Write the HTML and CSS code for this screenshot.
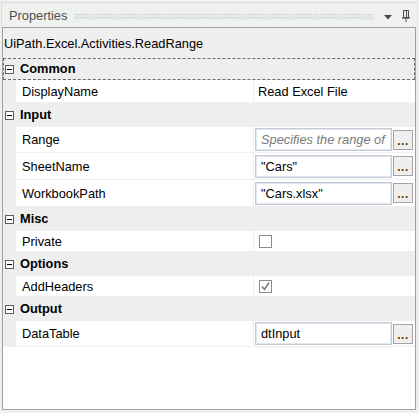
FILE: index.html
```html
<!DOCTYPE html>
<html>
<head>
<meta charset="utf-8">
<link rel="stylesheet" href="styles.css">
</head>
<body>
<div class="window">
  <div class="titlebar">
    <span class="title">Properties</span>
    <svg class="grip" width="300" height="6" viewBox="0 0 300 6">
      <defs>
        <pattern id="dots" width="3" height="3" patternUnits="userSpaceOnUse">
          <rect x="0" y="0" width="1" height="1" fill="#a9b2a9"/>
          <rect x="1.5" y="1.5" width="1" height="1" fill="#c4ccc4"/>
        </pattern>
      </defs>
      <rect x="0" y="0" width="300" height="6" fill="url(#dots)"/>
    </svg>
    <svg class="drop" width="8" height="5" viewBox="0 0 8 5"><path d="M0 0 H8 L4 4.5 Z" fill="#4a4a4a"/></svg>
    <svg class="pin" width="8" height="12" viewBox="0 0 8 12">
      <path d="M1.5 0.5 H6.5 V7.5 H1.5 Z" fill="none" stroke="#444" stroke-width="1"/>
      <path d="M4.5 1 V7" stroke="#444" stroke-width="1"/>
      <path d="M0 8 H8" stroke="#444" stroke-width="1.2"/>
      <path d="M4 8.5 V12" stroke="#444" stroke-width="1"/>
    </svg>
  </div>
  <div class="panel">
    <div class="desc">UiPath.Excel.Activities.ReadRange</div>
    <div class="grid">
      <div class="cat focus"><span class="box"></span><span class="cname">Common</span></div>
      <div class="row h23"><div class="name">DisplayName</div><div class="val"><span class="plain">Read Excel File</span></div></div>

      <div class="cat"><span class="box"></span><span class="cname">Input</span></div>
      <div class="row tb"><div class="name">Range</div><div class="val"><div class="textbox hint">Specifies the range of</div><div class="ell">...</div></div></div>
      <div class="row tb t27"><div class="name">SheetName</div><div class="val"><div class="textbox">"Cars"</div><div class="ell">...</div></div></div>
      <div class="row tb t27"><div class="name">WorkbookPath</div><div class="val"><div class="textbox">"Cars.xlsx"</div><div class="ell">...</div></div></div>

      <div class="cat"><span class="box"></span><span class="cname">Misc</span></div>
      <div class="row"><div class="name">Private</div><div class="val"><span class="check"></span></div></div>

      <div class="cat"><span class="box"></span><span class="cname">Options</span></div>
      <div class="row"><div class="name">AddHeaders</div><div class="val"><span class="check on"><svg width="11" height="11" viewBox="0 0 11 11"><path d="M2 5.5 L4.5 8.5 L9 1.5" fill="none" stroke="#7a7a7a" stroke-width="1.6"/></svg></span></div></div>

      <div class="cat"><span class="box"></span><span class="cname">Output</span></div>
      <div class="row tb"><div class="name">DataTable</div><div class="val"><div class="textbox">dtInput</div><div class="ell">...</div></div></div>
    </div>
  </div>
</div>
</body>
</html>
```

FILE: styles.css
```css
html, body {
  margin: 0;
  padding: 0;
}
body {
  width: 419px;
  height: 413px;
  background: #eef0ee;
  font-family: "Liberation Sans", Arial, sans-serif;
  font-size: 12.8px;
  color: #000;
  overflow: hidden;
}
.window {
  padding: 2px 3px 3px 2px;
  height: 413px;
  box-sizing: border-box;
  display: flex;
  flex-direction: column;
}
.titlebar {
  height: 25px;
  display: flex;
  align-items: center;
  background: #eef1ee;
  border-top: 1px solid #d9ddd9;
  margin-left: -1px;
  border-left: 1px solid #d9ddd9;
  box-sizing: border-box;
  padding-left: 7px;
  padding-right: 6px;
}
.title {
  color: #4e4e4e;
  line-height: 14px;
  margin-top: 1px;
}
.grip {
  margin-left: 8px;
  margin-top: 3px;
  display: block;
}
.drop {
  margin-left: 10px;
  margin-top: 4px;
  display: block;
}
.pin {
  margin-left: 10px;
  margin-top: 1px;
  display: block;
}
.panel {
  flex: 1;
  background: #fff;
  border: 1px solid #a0a0a0;
  display: flex;
  flex-direction: column;
}
.desc {
  height: 30px;
  background: #efefef;
  padding-left: 1px;
  line-height: 30px;
  box-sizing: border-box;
  padding-top: 1px;
}
.grid {
  display: flex;
  flex-direction: column;
}
.cat {
  height: 24px;
  background: #eeeeee;
  display: flex;
  align-items: center;
  box-sizing: border-box;
}
.cat.focus {
  height: 22px;
  border: 1px dashed #6d6d6d;
}
.box {
  width: 9px;
  height: 9px;
  border: 1px solid #5e5e5e;
  box-sizing: border-box;
  margin-left: 2px;
  position: relative;
  background: #fff;
}
.cat.focus .box {
  margin-left: 1px;
}
.box::after {
  content: "";
  position: absolute;
  left: 1px;
  right: 1px;
  top: 3px;
  height: 1px;
  background: #000;
}
.cname {
  font-weight: bold;
  margin-left: 6px;
  margin-top: -1px;
}
.row {
  height: 21px;
  display: flex;
  box-sizing: border-box;
  padding-left: 13px;
  background: #eeeeee;
}
.row.h23 { height: 23px; }
.row.tb { height: 26px; }
.row.t27 { height: 27px; }
.name {
  width: 238px;
  background: #fff;
  border-right: 1px solid #f0f0f0;
  border-bottom: 1px solid #f0f0f0;
  box-sizing: border-box;
  padding-left: 6px;
  display: flex;
  align-items: center;
}
.val {
  flex: 1;
  background: #fff;
  border-bottom: 1px solid #f0f0f0;
  display: flex;
  align-items: center;
  box-sizing: border-box;
}
.plain {
  margin-left: 4px;
}
.textbox {
  margin-left: 1px;
  width: 137px;
  height: 23px;
  box-sizing: border-box;
  border: 1px solid #c3ccd6;
  box-shadow: inset 0 0 0 1px #e2e7ed;
  padding-left: 5px;
  line-height: 21px;
  white-space: nowrap;
  overflow: hidden;
}
.textbox.hint {
  color: #7a7a7a;
  font-style: italic;
}
.ell {
  width: 20px;
  height: 20px;
  box-sizing: border-box;
  margin-left: 1px;
  border: 1px solid #a4a4a4;
  background: #efefef;
  color: #6b3a00;
  font-weight: bold;
  font-size: 12px;
  line-height: 20px;
  text-align: center;
  letter-spacing: 0.5px;
}
.check {
  width: 13px;
  height: 13px;
  box-sizing: border-box;
  border: 1px solid #8a8a8a;
  margin-left: 5px;
  background: #fff;
  display: flex;
  align-items: center;
  justify-content: center;
}
.check svg {
  display: block;
}
```
